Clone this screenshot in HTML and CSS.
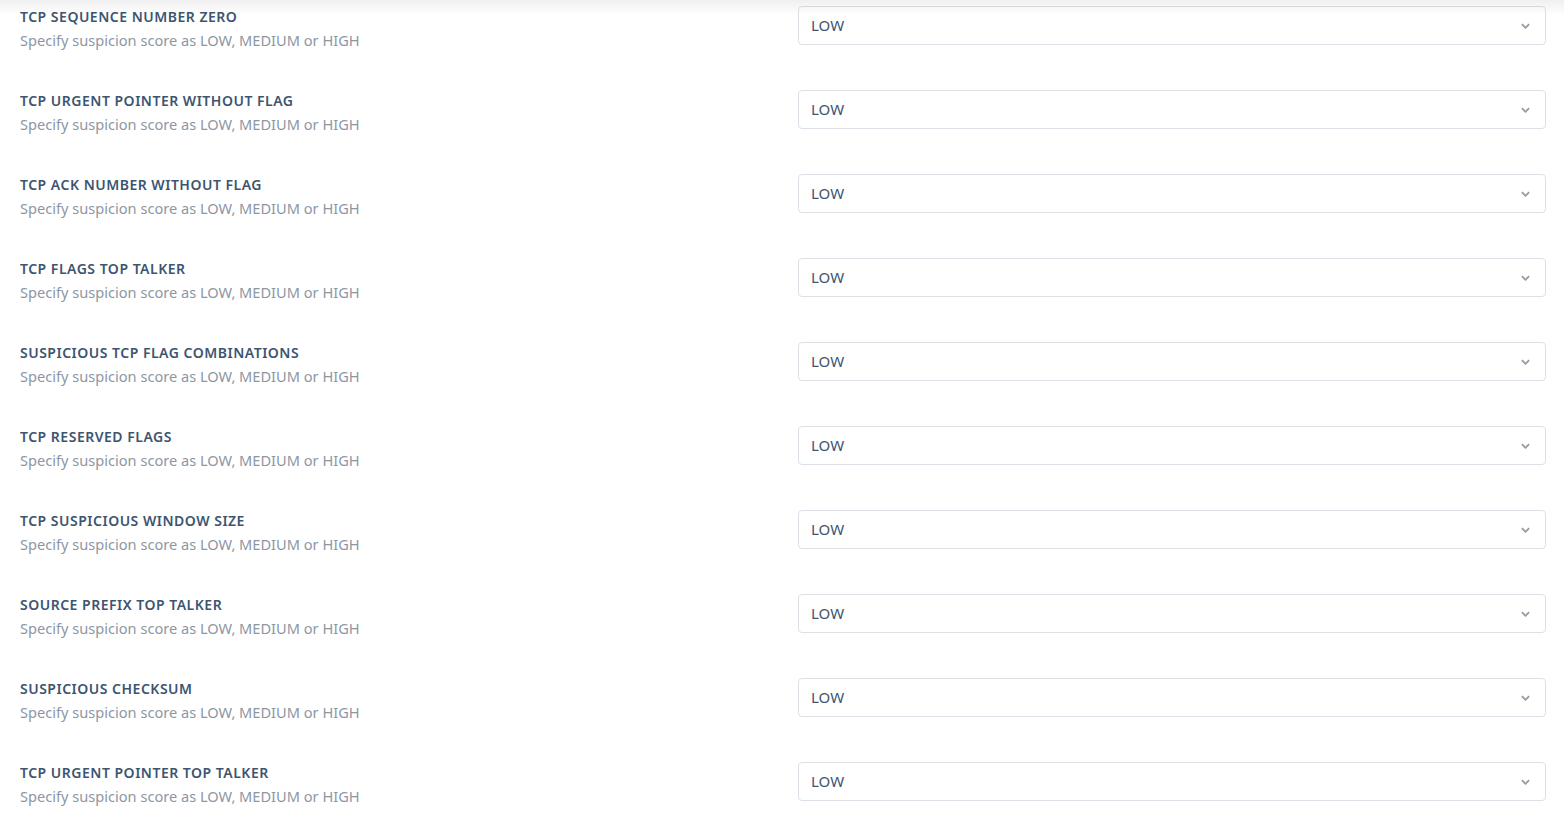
FILE: index.html
```html
<!DOCTYPE html>
<html lang="en">
<head>
    <meta charset="UTF-8">
    <meta name="viewport" content="width=device-width, initial-scale=1.0">
    <title>Suspicion scores</title>
    <link rel="stylesheet" href="styles.css">
</head>
<body>
    <div class="header-shadow"></div>

    <div class="settings">
        <div class="setting-row">
            <div class="setting-label">
                <h4>TCP Sequence Number Zero</h4>
                <p>Specify suspicion score as LOW, MEDIUM or HIGH</p>
            </div>
            <div class="select-box"><span>LOW</span><svg class="chevron" viewBox="0 0 10 6"><polyline points="1,1 5,5 9,1"/></svg></div>
        </div>
        <div class="setting-row">
            <div class="setting-label">
                <h4>TCP Urgent Pointer Without Flag</h4>
                <p>Specify suspicion score as LOW, MEDIUM or HIGH</p>
            </div>
            <div class="select-box"><span>LOW</span><svg class="chevron" viewBox="0 0 10 6"><polyline points="1,1 5,5 9,1"/></svg></div>
        </div>
        <div class="setting-row">
            <div class="setting-label">
                <h4>TCP ACK Number Without Flag</h4>
                <p>Specify suspicion score as LOW, MEDIUM or HIGH</p>
            </div>
            <div class="select-box"><span>LOW</span><svg class="chevron" viewBox="0 0 10 6"><polyline points="1,1 5,5 9,1"/></svg></div>
        </div>
        <div class="setting-row">
            <div class="setting-label">
                <h4>TCP Flags Top Talker</h4>
                <p>Specify suspicion score as LOW, MEDIUM or HIGH</p>
            </div>
            <div class="select-box"><span>LOW</span><svg class="chevron" viewBox="0 0 10 6"><polyline points="1,1 5,5 9,1"/></svg></div>
        </div>
        <div class="setting-row">
            <div class="setting-label">
                <h4>Suspicious TCP Flag Combinations</h4>
                <p>Specify suspicion score as LOW, MEDIUM or HIGH</p>
            </div>
            <div class="select-box"><span>LOW</span><svg class="chevron" viewBox="0 0 10 6"><polyline points="1,1 5,5 9,1"/></svg></div>
        </div>
        <div class="setting-row">
            <div class="setting-label">
                <h4>TCP Reserved Flags</h4>
                <p>Specify suspicion score as LOW, MEDIUM or HIGH</p>
            </div>
            <div class="select-box"><span>LOW</span><svg class="chevron" viewBox="0 0 10 6"><polyline points="1,1 5,5 9,1"/></svg></div>
        </div>
        <div class="setting-row">
            <div class="setting-label">
                <h4>TCP Suspicious Window Size</h4>
                <p>Specify suspicion score as LOW, MEDIUM or HIGH</p>
            </div>
            <div class="select-box"><span>LOW</span><svg class="chevron" viewBox="0 0 10 6"><polyline points="1,1 5,5 9,1"/></svg></div>
        </div>
        <div class="setting-row">
            <div class="setting-label">
                <h4>Source Prefix Top Talker</h4>
                <p>Specify suspicion score as LOW, MEDIUM or HIGH</p>
            </div>
            <div class="select-box"><span>LOW</span><svg class="chevron" viewBox="0 0 10 6"><polyline points="1,1 5,5 9,1"/></svg></div>
        </div>
        <div class="setting-row">
            <div class="setting-label">
                <h4>Suspicious Checksum</h4>
                <p>Specify suspicion score as LOW, MEDIUM or HIGH</p>
            </div>
            <div class="select-box"><span>LOW</span><svg class="chevron" viewBox="0 0 10 6"><polyline points="1,1 5,5 9,1"/></svg></div>
        </div>
        <div class="setting-row">
            <div class="setting-label">
                <h4>TCP Urgent Pointer Top Talker</h4>
                <p>Specify suspicion score as LOW, MEDIUM or HIGH</p>
            </div>
            <div class="select-box"><span>LOW</span><svg class="chevron" viewBox="0 0 10 6"><polyline points="1,1 5,5 9,1"/></svg></div>
        </div>
    </div>
</body>
</html>
```

FILE: styles.css
```css
body {
    margin: 0;
    background: #fff;
    font-family: "Noto Sans", "Open Sans", sans-serif;
    overflow: hidden;
}

/* sombra del header fijo */
.header-shadow {
    position: fixed;
    top: 0;
    left: 0;
    right: 0;
    height: 16px;
    background: linear-gradient(to bottom, rgba(0, 0, 0, 0.06), rgba(0, 0, 0, 0));
    pointer-events: none;
    z-index: 5;
}

.settings {
    display: flex;
    flex-direction: column;
    padding: 0 18px 0 20px;
}
.setting-row {
    display: flex;
    align-items: flex-start;
    height: 84px;
}
.setting-label {
    flex: 1;
    padding-top: 7px;
}
.setting-label h4 {
    margin: 0;
    font-size: 14px;
    line-height: 20px;
    font-weight: 600;
    text-transform: uppercase;
    letter-spacing: 0.5px;
    color: #3d5570;
}
.setting-label p {
    margin: 1px 0 0;
    font-size: 14.6px;
    line-height: 24px;
    color: #8c97a4;
}

.select-box {
    width: 748px;
    height: 39px;
    margin-top: 6px;
    box-sizing: border-box;
    border: 1px solid #dde0e6;
    border-radius: 4px;
    background: #fff;
    display: flex;
    align-items: center;
    justify-content: space-between;
    padding: 0 15px 2px 12px;
    font-size: 15px;
    color: #3d5570;
}
.select-box .chevron {
    margin-top: 2px;
}
.chevron {
    width: 9px;
    height: 6px;
    fill: none;
    stroke: #9a9a9a;
    stroke-width: 2;
}
```
